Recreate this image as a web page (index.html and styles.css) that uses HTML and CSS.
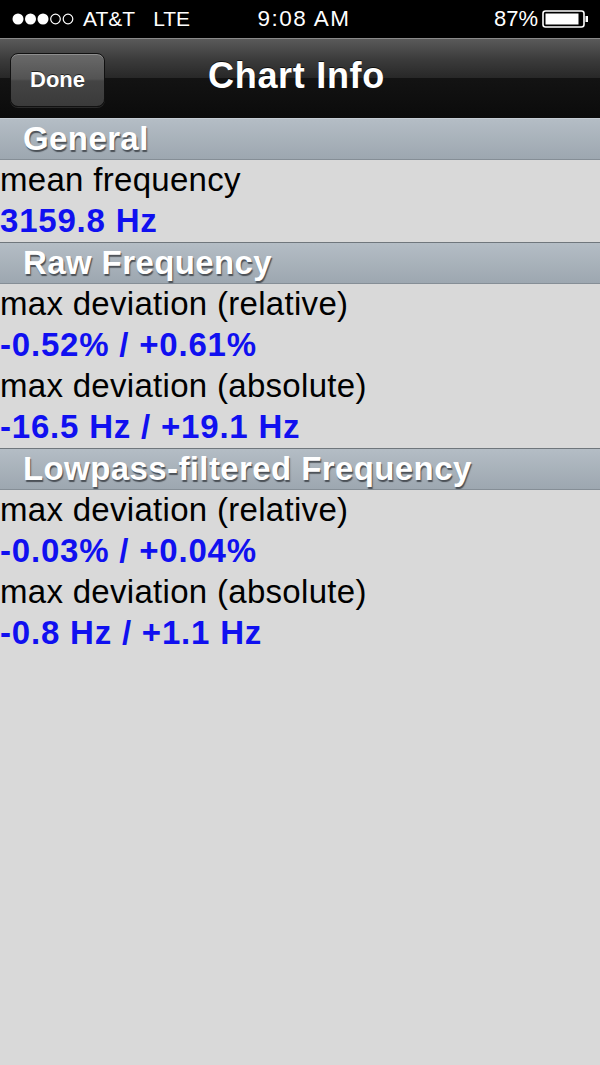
FILE: index.html
```html
<!DOCTYPE html>
<html>
<head>
<meta charset="utf-8">
<link rel="stylesheet" href="styles.css">
</head>
<body>
<div class="status">
  <div class="status-left">
    <svg class="dots" width="66" height="14" viewBox="0 0 66 14">
      <circle cx="6" cy="7" r="5.5" fill="#fff"/>
      <circle cx="18.5" cy="7" r="5.5" fill="#fff"/>
      <circle cx="31" cy="7" r="5.5" fill="#fff"/>
      <circle cx="43.5" cy="7" r="4.8" fill="none" stroke="#fff" stroke-width="1.2"/>
      <circle cx="56" cy="7" r="4.8" fill="none" stroke="#fff" stroke-width="1.2"/>
    </svg>
    <span class="carrier">AT&amp;T</span>
    <span class="net">LTE</span>
  </div>
  <div class="status-time">9:08 AM</div>
  <div class="status-right">
    <span>87%</span>
    <svg class="battery" width="48" height="18" viewBox="0 0 48 18">
      <rect x="1" y="1" width="41" height="16" rx="2.5" fill="none" stroke="#fff" stroke-width="1.6"/>
      <rect x="3.5" y="3.5" width="33" height="11" fill="#fff"/>
      <rect x="43.5" y="6" width="2.5" height="6" fill="#fff"/>
    </svg>
  </div>
</div>
<div class="navbar">
  <div class="nav-left"><button class="done">Done</button></div>
  <div class="nav-title">Chart Info</div>
  <div class="nav-right"></div>
</div>
<div class="content">
  <div class="section-header">General</div>
  <div class="row label">mean frequency</div>
  <div class="row value">3159.8 Hz</div>
  <div class="section-header">Raw Frequency</div>
  <div class="row label">max deviation (relative)</div>
  <div class="row value">-0.52% / +0.61%</div>
  <div class="row label">max deviation (absolute)</div>
  <div class="row value">-16.5 Hz / +19.1 Hz</div>
  <div class="section-header">Lowpass-filtered Frequency</div>
  <div class="row label">max deviation (relative)</div>
  <div class="row value">-0.03% / +0.04%</div>
  <div class="row label">max deviation (absolute)</div>
  <div class="row value">-0.8 Hz / +1.1 Hz</div>
</div>
</body>
</html>
```
FILE: styles.css
```css
html, body {
  margin: 0;
  padding: 0;
}
body {
  width: 600px;
  height: 1065px;
  background: #d9d9d9;
  font-family: "Liberation Sans", Arial, sans-serif;
  overflow: hidden;
}
.status {
  height: 38px;
  background: #000;
  color: #fff;
  font-size: 21px;
  display: grid;
  grid-template-columns: 1fr auto 1fr;
  align-items: center;
  padding: 0 10px 0 12px;
}
.status-left {
  display: flex;
  align-items: center;
}
.dots {
  display: block;
  margin-right: 5px;
}
.carrier {
  margin-right: 18px;
}
.status-time {
  font-size: 22.5px;
  letter-spacing: 1.5px;
  padding-left: 6px;
}
.status-right {
  display: flex;
  align-items: center;
  justify-content: flex-end;
  gap: 4px;
  font-size: 22px;
}
.battery {
  display: block;
}
.navbar {
  height: 79px;
  border-top: 1px solid #8a8a8a;
  background: linear-gradient(#5a5a5a 0%, #3c3c3c 25%, #282828 49%, #131313 50%, #0b0b0b 100%);
  display: grid;
  grid-template-columns: 1fr auto 1fr;
  align-items: center;
}
.nav-left {
  padding-left: 10px;
}
.done {
  width: 95px;
  height: 54px;
  border: 1px solid #111;
  border-radius: 8px;
  background: linear-gradient(#6a6a6a 0%, #535353 48%, #444 52%, #3a3a3a 100%);
  box-shadow: inset 0 1px 0 rgba(255,255,255,0.25), 0 1px 0 rgba(255,255,255,0.12);
  color: #fff;
  font-family: "Liberation Sans", Arial, sans-serif;
  font-weight: bold;
  font-size: 22px;
  text-shadow: 0 -1px 0 rgba(0,0,0,0.6);
  padding: 0;
  margin-top: 2px;
  display: block;
}
.nav-title {
  color: #fff;
  font-weight: bold;
  font-size: 36px;
  letter-spacing: 0.7px;
  text-shadow: 0 -1px 0 rgba(0,0,0,0.7);
  padding-bottom: 6px;
  padding-right: 7px;
}
.section-header {
  height: 40px;
  line-height: 40px;
  border-top: 1px solid #c4ccd3;
  border-bottom: 1px solid #858e96;
  background: linear-gradient(#b4bdc5, #9da7b0);
  color: #fff;
  font-weight: bold;
  font-size: 33px;
  letter-spacing: 0.4px;
  padding-left: 23px;
  text-shadow: 1px 2px 1px rgba(60,65,70,0.85);
  white-space: nowrap;
}
.content .row + .section-header {
  border-top-color: #6f767c;
}
.row {
  height: 41px;
  line-height: 39px;
  font-size: 33px;
  white-space: nowrap;
}
.label {
  color: #000;
  letter-spacing: 0.3px;
}
.value {
  color: #1010f0;
  font-weight: bold;
  letter-spacing: 0.8px;
}
```
